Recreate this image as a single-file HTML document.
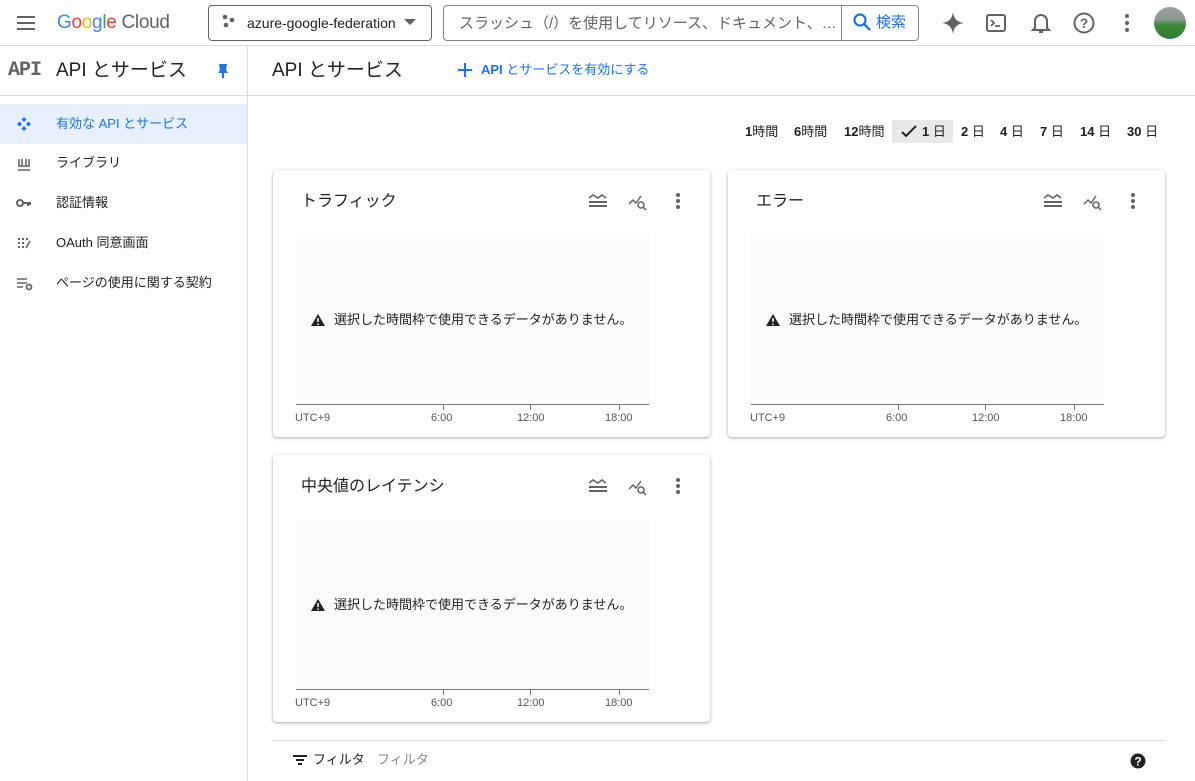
<!DOCTYPE html>
<html><head><meta charset="utf-8"><style>
*{box-sizing:border-box;margin:0;padding:0}
body{width:1195px;height:781px;overflow:hidden;background:#fff;font-family:"Liberation Sans","Noto Sans CJK JP",sans-serif;color:#202124;position:relative;line-height:1}
.a{position:absolute}
.t{white-space:nowrap}
.card{position:absolute;background:#fff;border-radius:4px;box-shadow:0 1px 2px rgba(60,64,67,.3),0 1px 3px 1px rgba(60,64,67,.12)}
.chart{position:absolute;left:23px;top:65px;width:353px;height:170px;background:#fbfbfb;border-bottom:1px solid #777}
.tick{position:absolute;top:235px;width:1px;height:5px;background:#777}
.lbl{position:absolute;top:243px;font-size:11px;color:#555}
.ttl{position:absolute;left:28px;top:24px;font-size:16px}
.msg{position:absolute;left:38px;top:143px;font-size:13px;white-space:nowrap}
.nav{position:absolute;left:0;width:247px;height:40px;font-size:13px}
.nav span{position:absolute;left:56px;top:13px}
</style></head><body>
<div class="a" style="left:0;top:0;width:1195px;height:46px;border-bottom:1px solid #dadce0"></div>
<svg class="a" style="left:16px;top:13px" width="20" height="20"><path d="M1 4h18M1 10h18M1 16h18" stroke="#5f6368" stroke-width="2"/></svg>
<div class="a t" style="left:57px;top:13px;font-size:19px;letter-spacing:-0.3px"><span style="color:#4285f4">G</span><span style="color:#ea4335">o</span><span style="color:#fbbc05">o</span><span style="color:#4285f4">g</span><span style="color:#34a853">l</span><span style="color:#ea4335">e</span> <span style="color:#5f6368">Cloud</span></div>
<div class="a" style="left:208px;top:5px;width:224px;height:36px;border:1px solid #5f6368;border-radius:4px"></div>
<svg class="a" style="left:222px;top:14px" width="14" height="14"><circle cx="3" cy="3" r="2.3" fill="#5f6368"/><circle cx="10" cy="6" r="2.3" fill="#5f6368"/><circle cx="4" cy="11" r="2.3" fill="#5f6368"/></svg>
<div class="a t" style="left:247px;top:16px;font-size:14px">azure-google-federation</div>
<svg class="a" style="left:404px;top:19px" width="12" height="7"><path d="M0 0h12L6 6z" fill="#5f6368"/></svg>
<div class="a" style="left:443px;top:5px;width:476px;height:36px;border:1px solid #80868b;border-radius:4px;background:#fff"></div>
<div class="a" style="left:841px;top:6px;width:1px;height:34px;background:#80868b"></div>
<div class="a t" style="left:459px;top:16px;font-size:15px;color:#5f6368">スラッシュ（/）を使用してリソース、ドキュメント、…</div>
<svg class="a" style="left:852px;top:12px" width="20" height="20"><circle cx="8" cy="8" r="5.5" stroke="#1a73e8" stroke-width="2.2" fill="none"/><path d="M12 12l6 6" stroke="#1a73e8" stroke-width="2.4"/></svg>
<div class="a t" style="left:876px;top:15px;font-size:15px;color:#1a73e8">検索</div>
<svg class="a" style="left:941px;top:11px" width="24" height="24"><path d="M12 1C13 8 16 11 23 12 16 13 13 16 12 23 11 16 8 13 1 12 8 11 11 8 12 1z" fill="#5f6368"/></svg>
<svg class="a" style="left:985px;top:12px" width="22" height="22"><rect x="2" y="3" width="18" height="16" rx="2" stroke="#5f6368" stroke-width="2" fill="none"/><path d="M6 8l3 3-3 3M10 14h5" stroke="#5f6368" stroke-width="1.8" fill="none"/></svg>
<svg class="a" style="left:1030px;top:11px" width="22" height="24"><path d="M5 17V10a6 6 0 0112 0v7l2 2H3z" stroke="#5f6368" stroke-width="2" fill="none"/><path d="M9 21h4" stroke="#5f6368" stroke-width="2"/></svg>
<svg class="a" style="left:1073px;top:12px" width="22" height="22"><circle cx="11" cy="11" r="9.5" stroke="#5f6368" stroke-width="2" fill="none"/><text x="11" y="16" font-size="14" text-anchor="middle" fill="#5f6368" font-family="Liberation Sans" font-weight="bold">?</text></svg>
<svg class="a" style="left:1124px;top:13px" width="6" height="20"><circle cx="3" cy="3" r="2" fill="#5f6368"/><circle cx="3" cy="10" r="2" fill="#5f6368"/><circle cx="3" cy="17" r="2" fill="#5f6368"/></svg>
<div class="a" style="left:1154px;top:7px;width:32px;height:32px;border-radius:50%;background:linear-gradient(#9aa0a0 0,#8a9a90 40%,#3f8a3a 55%,#2e7d32 100%)"></div>
<div class="a" style="left:247px;top:46px;width:1px;height:735px;background:#dadce0"></div>
<div class="a" style="left:0;top:95px;width:1195px;height:1px;background:#dadce0"></div>
<div class="a t" style="left:8px;top:61px;font-size:20px;font-family:'Liberation Mono',monospace;font-weight:bold;color:#5f6368;letter-spacing:-1px">API</div>
<div class="a t" style="left:56px;top:61px;font-size:19px">API とサービス</div>
<svg class="a" style="left:216px;top:63px" width="14" height="16"><path d="M3 1h8l-1 6 2 3H2l2-3zM6 10h2v5H6z" fill="#1a73e8"/></svg>
<div class="a t" style="left:272px;top:61px;font-size:19px">API とサービス</div>
<svg class="a" style="left:457px;top:62px" width="16" height="16"><path d="M8 1v14M1 8h14" stroke="#1a73e8" stroke-width="2"/></svg>
<div class="a t" style="left:481px;top:63px;font-size:13px;color:#1a73e8"><b>API</b> とサービスを有効にする</div>
<div class="nav" style="top:104px;background:#e8f0fe;width:247px"><svg class="a" style="left:16px;top:12px" width="16" height="16"><path d="M8 1l2.5 2.5L8 6 5.5 3.5zM8 10l2.5 2.5L8 15l-2.5-2.5zM1 8l2.5-2.5L6 8l-2.5 2.5zM10 8l2.5-2.5L15 8l-2.5 2.5z" fill="#1a73e8"/></svg><span style="color:#1a73e8">有効な API とサービス</span></div>
<div class="nav" style="top:143px"><svg class="a" style="left:17px;top:14px" width="14" height="14"><path d="M1 13h12M1 9h12M2 2v7M5 2v7M9 2v7M12 2v7" stroke="#5f6368" stroke-width="1.5"/></svg><span>ライブラリ</span></div>
<div class="nav" style="top:183px"><svg class="a" style="left:16px;top:14px" width="16" height="12"><circle cx="4" cy="6" r="3" stroke="#5f6368" stroke-width="2" fill="none"/><path d="M7 6h8M12 6v3M14 6v2" stroke="#5f6368" stroke-width="2"/></svg><span>認証情報</span></div>
<div class="nav" style="top:223px"><svg class="a" style="left:17px;top:13px" width="14" height="14" fill="#5f6368"><rect x="1" y="2" width="2" height="2"/><rect x="5" y="2" width="2" height="2"/><rect x="9" y="2" width="2" height="2"/><rect x="1" y="6" width="2" height="2"/><rect x="5" y="6" width="2" height="2"/><rect x="1" y="10" width="2" height="2"/><rect x="5" y="10" width="2" height="2"/><path d="M13 5L9 12" stroke="#5f6368" stroke-width="1.5"/></svg><span>OAuth 同意画面</span></div>
<div class="nav" style="top:263px"><svg class="a" style="left:16px;top:14px" width="18" height="14"><path d="M1 2h10M1 6h10M1 10h6" stroke="#5f6368" stroke-width="1.5"/><circle cx="13" cy="10" r="2.5" stroke="#5f6368" stroke-width="1.8" fill="none"/></svg><span>ページの使用に関する契約</span></div>
<div class="a" style="left:892px;top:120px;width:61px;height:23px;background:#e8e8e8"></div>
<div class="a t" style="left:745px;top:125px;font-size:13px;font-weight:bold">1<span style="font-weight:normal">時間</span></div>
<div class="a t" style="left:794px;top:125px;font-size:13px;font-weight:bold">6<span style="font-weight:normal">時間</span></div>
<div class="a t" style="left:844px;top:125px;font-size:13px;font-weight:bold">12<span style="font-weight:normal">時間</span></div>
<svg class="a" style="left:901px;top:125px" width="16" height="13"><path d="M1 7l4 4 10-10" stroke="#202124" stroke-width="2" fill="none"/></svg>
<div class="a t" style="left:922px;top:125px;font-size:13px"><b>1</b> 日</div>
<div class="a t" style="left:961px;top:125px;font-size:13px"><b>2</b> 日</div>
<div class="a t" style="left:1000px;top:125px;font-size:13px"><b>4</b> 日</div>
<div class="a t" style="left:1040px;top:125px;font-size:13px"><b>7</b> 日</div>
<div class="a t" style="left:1080px;top:125px;font-size:13px"><b>14</b> 日</div>
<div class="a t" style="left:1127px;top:125px;font-size:13px"><b>30</b> 日</div>
<div class="card" style="left:273px;top:170px;width:437px;height:267px"></div>
<div class="card" style="left:728px;top:170px;width:437px;height:267px"></div>
<div class="card" style="left:273px;top:455px;width:437px;height:267px"></div>
<script>
var cards=[[273,170,"トラフィック"],[728,170,"エラー"],[273,455,"中央値のレイテンシ"]];
var h="";
cards.forEach(function(c){
 var x=c[0],y=c[1];
 h+='<div class="a" style="left:'+x+'px;top:'+y+'px;width:437px;height:267px">'+
 '<div class="ttl t">'+c[2]+'</div>'+
 '<svg class="a" style="left:315px;top:23px" width="20" height="16"><path d="M1 5l4-3 5 3 4-3 4 3" stroke="#5f6368" stroke-width="1.6" fill="none"/><path d="M1 9h18M1 13h18" stroke="#5f6368" stroke-width="2"/></svg>'+
 '<svg class="a" style="left:355px;top:23px" width="20" height="18"><path d="M1 11l4-4 3 3 5-7" stroke="#5f6368" stroke-width="1.5" fill="none"/><circle cx="13" cy="12" r="3" stroke="#5f6368" stroke-width="1.5" fill="none"/><path d="M15 14l3 3" stroke="#5f6368" stroke-width="1.5"/></svg>'+
 '<svg class="a" style="left:402px;top:22px" width="6" height="18"><circle cx="3" cy="3" r="2" fill="#5f6368"/><circle cx="3" cy="9" r="2" fill="#5f6368"/><circle cx="3" cy="15" r="2" fill="#5f6368"/></svg>'+
 '<div class="chart"></div>'+
 '<div class="tick" style="left:170px"></div><div class="tick" style="left:257px"></div><div class="tick" style="left:346px"></div>'+
 '<div class="lbl" style="left:22px">UTC+9</div><div class="lbl" style="left:158px">6:00</div><div class="lbl" style="left:244px">12:00</div><div class="lbl" style="left:332px">18:00</div>'+
 '<svg class="a" style="left:37px;top:143px" width="16" height="14"><path d="M8 1L15 13H1z" fill="#202124"/><path d="M8 5v4M8 10.5v1.5" stroke="#fff" stroke-width="1.5"/></svg>'+
 '<div class="msg" style="left:61px">選択した時間枠で使用できるデータがありません。</div></div>';
});
document.write(h);
</script>
<div class="a" style="left:272px;top:740px;width:894px;height:1px;background:#dadce0"></div>
<svg class="a" style="left:292px;top:754px" width="16" height="12"><path d="M1 2h14M4 6h8M6 10h4" stroke="#202124" stroke-width="2"/></svg>
<div class="a t" style="left:313px;top:753px;font-size:13px">フィルタ</div>
<div class="a t" style="left:377px;top:753px;font-size:13px;color:#80868b">フィルタ</div>
<svg class="a" style="left:1130px;top:753px" width="16" height="16"><circle cx="8" cy="8" r="7.5" fill="#202124"/><text x="8" y="12.5" font-size="12" text-anchor="middle" fill="#fff" font-family="Liberation Sans" font-weight="bold">?</text></svg>
</body></html>
